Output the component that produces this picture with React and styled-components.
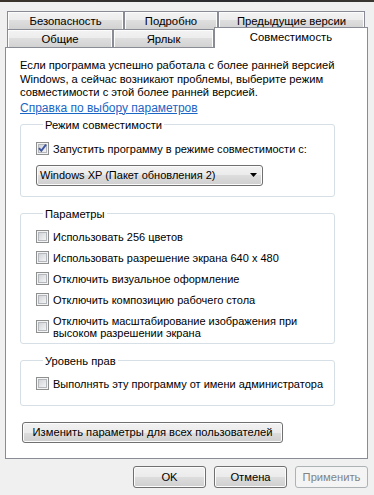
import React from 'react';
import styled, { createGlobalStyle } from 'styled-components';

const Global = createGlobalStyle`
  html, body { margin: 0; padding: 0; background: #f0f0f0; }
  body { font-family: "Liberation Sans", Arial, sans-serif; font-size: 11px; color: #000; }
  * { box-sizing: border-box; }
`;

const Dialog = styled.div`
  width: 374px;
  height: 495px;
  background: #f0f0f0;
  overflow: hidden;
`;

const FrameEdge = styled.div`
  height: 2px;
  background: linear-gradient(90deg, #3b342c, #2b2b30 60%, #3a3631);
`;

const TabStrip = styled.div`
  margin: 9px 0 0 7px;
  display: flex;
  flex-direction: column;
`;

const TabRow = styled.div`
  display: flex;
  height: 18px;
`;

const Tab = styled.div`
  width: ${p => p.$w}px;
  height: 18px;
  border: 1px solid #898c95;
  border-bottom: none;
  background: linear-gradient(#f3f3f3 0%, #ececec 50%, #dedede 50%, #d2d2d2 100%);
  box-shadow: inset 1px 1px 0 #fcfcfc, inset -1px 0 0 #fcfcfc;
  display: flex;
  align-items: center;
  justify-content: center;
  font-size: 11.3px;
  line-height: 14px;
  white-space: nowrap;
`;

const ActiveTab = styled.div`
  position: relative;
  z-index: 2;
  width: ${p => p.$w}px;
  height: 21px;
  margin-top: -2px;
  border: 1px solid #898c95;
  border-bottom: none;
  background: #fff;
  display: flex;
  align-items: center;
  justify-content: center;
  padding-bottom: 3px;
  font-size: 11.3px;
  line-height: 14px;
  white-space: nowrap;
`;

const Panel = styled.div`
  margin-left: 5px;
  width: 363px;
  height: 412px;
  border: 1px solid #898c95;
  background: #fff;
  padding: 11px 0 0 14px;
`;

const Intro = styled.p`
  margin: 0;
  font-size: 11.2px;
  line-height: 13.5px;
  white-space: nowrap;
`;

const HelpLink = styled.a`
  display: inline-block;
  margin-top: 1px;
  font-size: 12px;
  line-height: 14px;
  color: #1a66c4;
  text-decoration: underline;
  cursor: pointer;
`;

const Group = styled.fieldset`
  width: 315px;
  margin: ${p => p.$mt}px 0 0 0;
  padding: 0 0 ${p => p.$pb}px 15px;
  border: 1px solid #d5dfe5;
  border-radius: 3px;
  min-width: 0;
`;

const GroupTitle = styled.legend`
  margin-left: 7px;
  padding: 0 2px;
  font-size: 11.2px;
  line-height: 14px;
`;

const OptionList = styled.div`
  display: flex;
  flex-direction: column;
  gap: 7px;
  margin-top: ${p => p.$mt}px;
`;

const Option = styled.label`
  display: flex;
  align-items: ${p => (p.$multi ? 'flex-start' : 'center')};
  gap: 4px;
  line-height: ${p => (p.$multi ? 12.5 : 14)}px;
  margin-top: ${p => p.$mt || 0}px;
  white-space: nowrap;
  cursor: default;
`;

const BoxWrap = styled.span`
  flex: none;
  width: 13px;
  height: 13px;
  margin-top: ${p => p.$mt || 0}px;
  display: block;
`;

const Combo = styled.div`
  margin-top: 9px;
  width: 227px;
  height: 21px;
  border: 1px solid #707070;
  border-radius: 3px;
  background: linear-gradient(#f2f2f2 0%, #ebebeb 50%, #dddddd 50%, #cfcfcf 100%);
  box-shadow: inset 0 0 0 1px #fbfbfb;
  display: flex;
  align-items: center;
  justify-content: space-between;
  padding: 0 5px 0 3px;
  font-size: 11px;
  line-height: 14px;
`;

const Button = styled.button`
  font: inherit;
  font-size: 11.2px;
  width: ${p => p.$w}px;
  height: ${p => p.$h || 22}px;
  margin: 0;
  padding: 0;
  border: 1px solid ${p => (p.disabled ? '#adb2b5' : '#707070')};
  border-radius: 3px;
  color: ${p => (p.disabled ? '#838383' : '#000')};
  background: ${p =>
    p.disabled
      ? '#f4f4f4'
      : 'linear-gradient(#f2f2f2 0%, #ebebeb 50%, #dddddd 50%, #cfcfcf 100%)'};
  box-shadow: ${p => (p.disabled ? 'none' : 'inset 0 0 0 1px #fcfcfc')};
  line-height: 14px;
  white-space: nowrap;
`;

const WideButton = styled(Button)`
  margin: 16px 0 0 2px;
  display: block;
`;

const Footer = styled.div`
  display: flex;
  justify-content: flex-end;
  gap: 8px;
  margin-top: 7px;
  padding-right: 6px;
`;

function CheckBox({ checked, mt }) {
  return (
    <BoxWrap $mt={mt}>
      <svg width="13" height="13" viewBox="0 0 13 13">
        <defs>
          <linearGradient id="cbfill" x1="0" y1="0" x2="1" y2="1">
            <stop offset="0" stopColor="#cfd2d6" />
            <stop offset="1" stopColor="#f6f6f6" />
          </linearGradient>
        </defs>
        <rect x="0.5" y="0.5" width="12" height="12" fill="#f4f4f4" stroke="#8e8f8f" />
        <rect x="2.5" y="2.5" width="8" height="8" fill="url(#cbfill)" stroke="#b4b8bd" />
        {checked && (
          <path d="M3 6.2 L5.3 8.8 L10 2.6" fill="none" stroke="#3f56a3" strokeWidth="1.9" strokeLinejoin="miter" />
        )}
      </svg>
    </BoxWrap>
  );
}

function Arrow() {
  return (
    <svg width="7" height="4" viewBox="0 0 7 4">
      <path d="M0 0 H7 L3.5 4 Z" fill="#000" />
    </svg>
  );
}

export default function App() {
  return (
    <Dialog>
      <Global />
      <FrameEdge />
      <TabStrip>
        <TabRow>
          <Tab $w={117}>Безопасность</Tab>
          <Tab $w={94}>Подробно</Tab>
          <Tab $w={147}>Предыдущие версии</Tab>
        </TabRow>
        <TabRow>
          <Tab $w={106}>Общие</Tab>
          <Tab $w={101}>Ярлык</Tab>
          <ActiveTab $w={154}>Совместимость</ActiveTab>
        </TabRow>
      </TabStrip>
      <Panel>
        <Intro>
          Если программа успешно работала с более ранней версией
          <br />
          Windows, а сейчас возникают проблемы, выберите режим
          <br />
          совместимости с этой более ранней версией.
        </Intro>
        <HelpLink>Справка по выбору параметров</HelpLink>

        <Group $mt={3} $pb={10}>
          <GroupTitle>Режим совместимости</GroupTitle>
          <OptionList $mt={10}>
            <Option>
              <CheckBox checked />
              Запустить программу в режиме совместимости с:
            </Option>
          </OptionList>
          <Combo>
            <span>Windows XP (Пакет обновления 2)</span>
            <Arrow />
          </Combo>
        </Group>

        <Group $mt={10} $pb={3}>
          <GroupTitle>Параметры</GroupTitle>
          <OptionList $mt={9}>
            <Option>
              <CheckBox />
              Использовать 256 цветов
            </Option>
            <Option>
              <CheckBox />
              Использовать разрешение экрана 640 x 480
            </Option>
            <Option>
              <CheckBox />
              Отключить визуальное оформление
            </Option>
            <Option>
              <CheckBox />
              Отключить композицию рабочего стола
            </Option>
            <Option $multi $mt={1}>
              <CheckBox mt={5} />
              <span>
                Отключить масштабирование изображения при
                <br />
                высоком разрешении экрана
              </span>
            </Option>
          </OptionList>
        </Group>

        <Group $mt={10} $pb={14}>
          <GroupTitle>Уровень прав</GroupTitle>
          <OptionList $mt={9}>
            <Option>
              <CheckBox />
              Выполнять эту программу от имени администратора
            </Option>
          </OptionList>
        </Group>

        <WideButton $w={261} $h={21}>Изменить параметры для всех пользователей</WideButton>
      </Panel>
      <Footer>
        <Button $w={73}>OK</Button>
        <Button $w={73}>Отмена</Button>
        <Button $w={73} disabled>Применить</Button>
      </Footer>
    </Dialog>
  );
}
